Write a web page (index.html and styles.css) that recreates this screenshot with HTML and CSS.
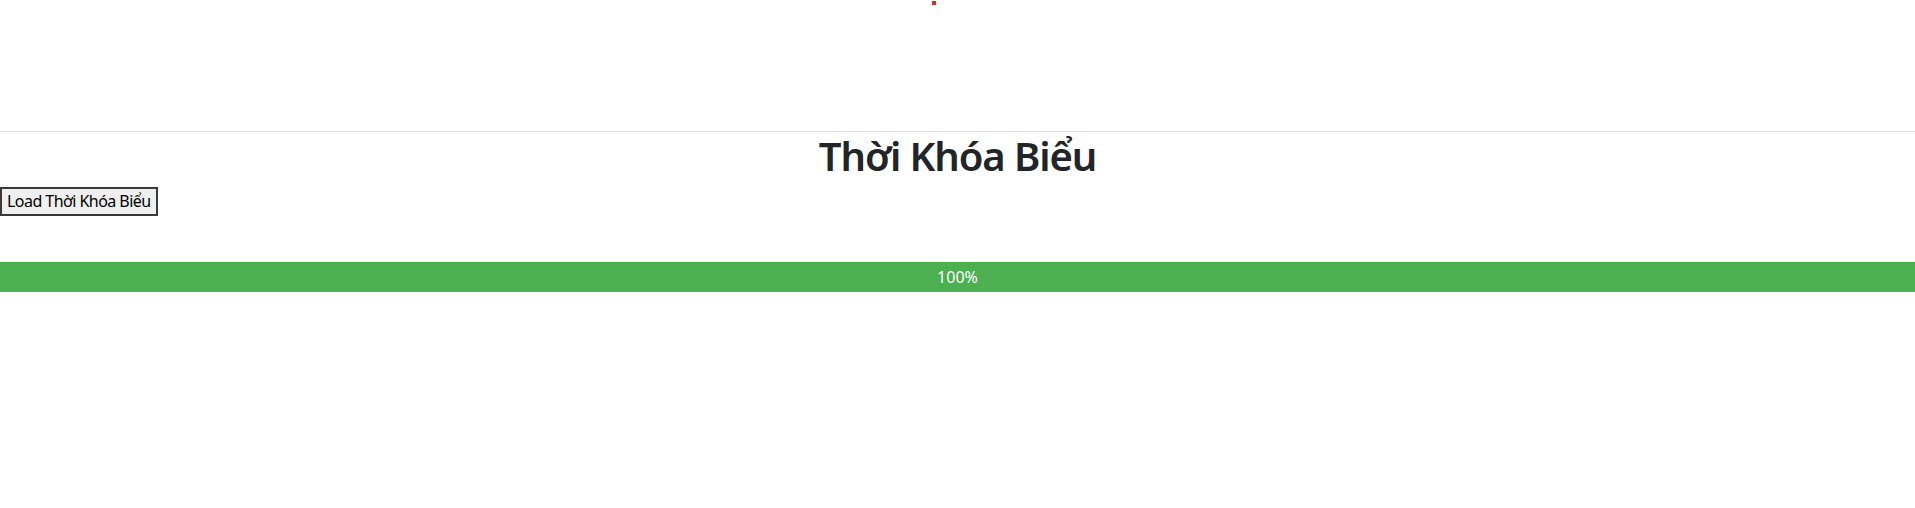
FILE: index.html
```html
<!DOCTYPE html>
<html lang="vi">
<head>
<meta charset="utf-8">
<title>Thời Khóa Biểu</title>
<link rel="stylesheet" href="styles.css">
</head>
<body>
<header class="top">
  <span class="dot"></span>
</header>
<main class="content">
  <h1 class="title">Thời Khóa Biểu</h1>
  <button class="load-btn" type="button">Load Thời Khóa Biểu</button>
  <div class="progress">
    <div class="progress-bar" style="width: 100%">100%</div>
  </div>
</main>
</body>
</html>
```
FILE: styles.css
```css
html, body {
  margin: 0;
  padding: 0;
  background: #ffffff;
}
body {
  font-family: "Noto Sans", "Open Sans", sans-serif;
  color: #212529;
  font-size: 16px;
}
.top {
  position: relative;
  height: 131px;
  border-bottom: 1px solid #e0e0e0;
}
.dot {
  position: absolute;
  left: 932px;
  top: 1px;
  width: 4px;
  height: 4px;
  background: #e82424;
}
.content {
  display: flex;
  flex-direction: column;
  align-items: flex-start;
}
.title {
  align-self: stretch;
  text-align: center;
  margin: 0 0 7px;
  font-size: 40px;
  font-weight: 600;
  letter-spacing: -1.1px;
  line-height: 48px;
}
.load-btn {
  font-family: "Noto Sans", "Open Sans", sans-serif;
  font-size: 16px;
  letter-spacing: -0.55px;
  line-height: 22px;
  padding: 1px 5px 2px;
  color: #000;
  background: #efefef;
  border: 2px solid #3a3a3a;
  border-radius: 0;
  margin: 0;
}
.progress {
  align-self: stretch;
  margin-top: 46px;
  height: 30px;
  background: #e9e9e9;
}
.progress-bar {
  height: 30px;
  line-height: 30px;
  background: #4caf50;
  color: #ffffff;
  text-align: center;
  font-size: 16px;
}
```
